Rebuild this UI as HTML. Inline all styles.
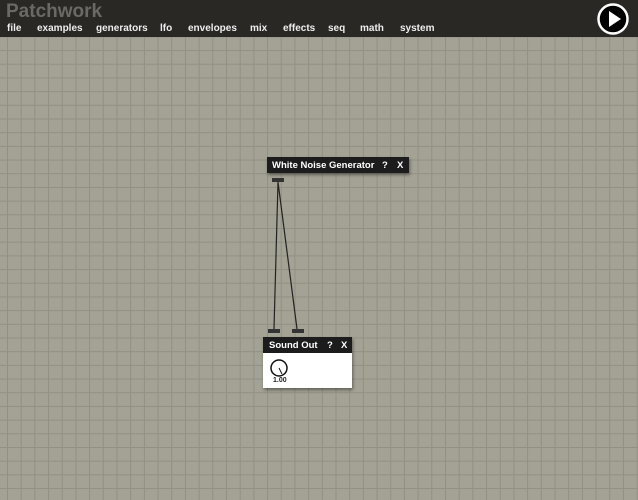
<!DOCTYPE html>
<html><head><style>
body{margin:0;width:638px;height:500px;overflow:hidden;position:relative;font-family:"Liberation Sans",sans-serif;
background-color:#a3a294;
background-image:linear-gradient(to right,#919083 1px,transparent 1px),linear-gradient(to bottom,#919083 1px,transparent 1px);
background-size:13.7px 13.7px;background-position:7px 9px;}
#hdr{position:absolute;left:0;top:0;width:638px;height:37px;background:#292825;}
.t{position:absolute;left:6px;top:1px;font-size:19px;font-weight:bold;color:#6a6964;}
.m{position:absolute;top:23px;font-size:10px;font-weight:bold;color:#eee;}
.node{position:absolute;background:#1c1c1c;color:#fff;font-size:9.5px;font-weight:bold;box-shadow:1px 2px 3px rgba(0,0,0,.4);}
.node span{position:absolute;top:3px}
.port{position:absolute;background:#333;height:4px;width:12px;}
</style></head><body>
<div id="hdr">
<div class="t">Patchwork</div>
<div class="m" style="left:7px">file</div>
<div class="m" style="left:37px">examples</div>
<div class="m" style="left:96px">generators</div>
<div class="m" style="left:160px">lfo</div>
<div class="m" style="left:188px">envelopes</div>
<div class="m" style="left:250px">mix</div>
<div class="m" style="left:283px">effects</div>
<div class="m" style="left:328px">seq</div>
<div class="m" style="left:360px">math</div>
<div class="m" style="left:400px">system</div>
<svg style="position:absolute;left:597px;top:3px" width="34" height="34"><circle cx="16" cy="16" r="14.5" fill="#000" stroke="#fff" stroke-width="2.5"/><path d="M12 8 L24 16 L12 24 Z" fill="#fff"/></svg>
</div>
<svg style="position:absolute;left:0;top:0" width="638" height="500"><path d="M278 182 L274 329 M278 182 L297 329" stroke="#222" stroke-width="1.2" fill="none"/></svg>
<div class="node" style="left:267px;top:157px;width:142px;height:16px;"><span style="left:5px">White Noise Generator</span><span style="left:115px">?</span><span style="left:130px">X</span></div>
<div class="port" style="left:272px;top:178px"></div>
<div class="port" style="left:268px;top:329px"></div>
<div class="port" style="left:292px;top:329px"></div>
<div class="node" style="left:263px;top:337px;width:89px;height:16px;"><span style="left:6px">Sound Out</span><span style="left:64px">?</span><span style="left:78px">X</span></div>
<div style="position:absolute;left:263px;top:353px;width:89px;height:35px;background:#fff;box-shadow:1px 2px 3px rgba(0,0,0,.4)">
<svg style="position:absolute;left:6px;top:5px" width="20" height="20"><circle cx="10" cy="10" r="8" fill="none" stroke="#111" stroke-width="1.5"/><path d="M10 10 L13 16" stroke="#111" stroke-width="1"/></svg>
<span style="position:absolute;left:10px;top:24px;font-size:7px;font-weight:bold;color:#222">1.00</span>
</div>
</body></html>
